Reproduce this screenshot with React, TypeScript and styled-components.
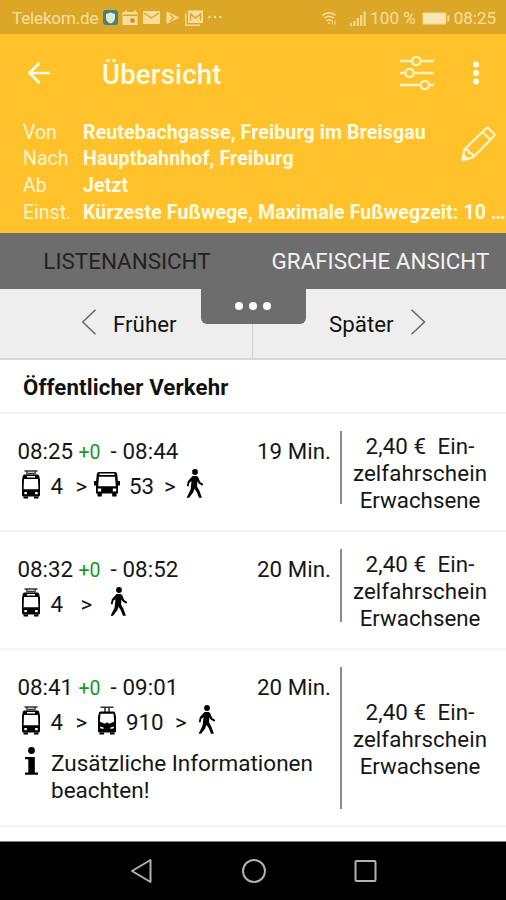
import React from "react";
import styled, { createGlobalStyle } from "styled-components";

const GlobalStyle = createGlobalStyle`
  *, *::before, *::after { box-sizing: border-box; }
  html, body { margin: 0; padding: 0; background: #fff; }
  body { font-family: Roboto, "Liberation Sans", sans-serif; color: #161616; overflow: hidden; }
  svg { display: block; flex: none; }
`;

const Screen = styled.div`
  width: 506px;
  height: 900px;
  display: flex;
  flex-direction: column;
  overflow: hidden;
  background: #fff;
`;

/* ---------- status bar ---------- */

const StatusBar = styled.div`
  height: 34px;
  flex: none;
  display: flex;
  align-items: center;
  justify-content: space-between;
  padding: 2px 10px 0 12px;
  background: #dca727;
  color: #f9dfa0;
  font-size: 17px;
  line-height: 34px;
  white-space: nowrap;
`;

const StatusGroup = styled.div`
  display: flex;
  align-items: center;
`;

const StatusText = styled.span<{ $spacing?: number; $left?: number; $width?: number }>`
  display: inline-block;
  width: ${(p) => (p.$width ? `${p.$width}px` : "auto")};
  letter-spacing: ${(p) => p.$spacing ?? 0}px;
  margin-left: ${(p) => p.$left ?? 0}px;
`;

const Spacer = styled.span<{ $width: number }>`
  flex: none;
  width: ${(p) => p.$width}px;
`;

/* ---------- header ---------- */

const Header = styled.header`
  height: 199px;
  flex: none;
  background: #ffc22b;
  color: #fffbe6;
`;

const TitleBar = styled.div`
  height: 82px;
  display: flex;
  align-items: center;
  padding: 0 26px 4px 27px;
`;

const Title = styled.h1`
  flex: 1;
  margin: 0 0 0 51px;
  padding-top: 4px;
  font-size: 27.5px;
  line-height: 40px;
  font-weight: 500;
  letter-spacing: 0.2px;
`;

const Query = styled.div`
  position: relative;
  padding: 3.5px 0 0 23px;
`;

const QueryRow = styled.div`
  display: flex;
  height: 26.8px;
  align-items: center;
  font-size: 19.5px;
  line-height: 26.8px;
  white-space: nowrap;
`;

const QueryLabel = styled.span`
  flex: none;
  width: 60px;
  opacity: 0.9;
`;

const QueryValue = styled.span`
  flex: none;
  font-weight: 700;
  letter-spacing: 0.14px;
`;

const EditButton = styled.button`
  position: absolute;
  top: 10px;
  right: 9px;
  padding: 0;
  border: 0;
  background: none;
`;

/* ---------- tabs ---------- */

const Tabs = styled.nav`
  position: relative;
  height: 56px;
  flex: none;
  display: grid;
  grid-template-columns: 253px 253px;
  background: #6d6d6d;
`;

const Tab = styled.div<{ $active?: boolean }>`
  text-align: center;
  padding-left: ${(p) => (p.$active ? "1px" : "2px")};
  font-size: 22.4px;
  line-height: 57px;
  color: ${(p) => (p.$active ? "#222" : "#f2f2f2")};
  white-space: nowrap;
`;

const PullHandle = styled.div`
  position: absolute;
  top: 55px;
  left: 201px;
  width: 105px;
  height: 36px;
  display: flex;
  align-items: center;
  justify-content: center;
  gap: 6px;
  padding: 0 2px 1px 0;
  border-radius: 0 0 6px 6px;
  background: #6d6d6d;
`;

const HandleDot = styled.i`
  width: 8px;
  height: 8px;
  border-radius: 50%;
  background: #fff;
`;

/* ---------- earlier / later ---------- */

const Pager = styled.div`
  height: 71px;
  flex: none;
  display: grid;
  grid-template-columns: 253px 253px;
  background: #eee;
  border-bottom: 2px solid #d9d9d9;
`;

const PagerButton = styled.div<{ $side: "left" | "right" }>`
  display: flex;
  align-items: center;
  gap: ${(p) => (p.$side === "left" ? 15 : 16)}px;
  padding-left: ${(p) => (p.$side === "left" ? 82 : 76)}px;
  border-right: ${(p) => (p.$side === "left" ? "1px solid #d4d4d4" : "0")};
  font-size: 22.3px;
  color: #111;

  svg { margin-bottom: 3px; }
`;

/* ---------- connections ---------- */

const SectionTitle = styled.h2`
  height: 54px;
  flex: none;
  margin: 0;
  padding: 0 0 0 23px;
  font-size: 22.2px;
  line-height: 54px;
  font-weight: 700;
  letter-spacing: 0.15px;
  color: #111;
  border-bottom: 2px solid #f4f4f4;
`;

const Row = styled.article<{ $height: number; $bottom: number }>`
  height: ${(p) => p.$height}px;
  flex: none;
  display: grid;
  grid-template-columns: 342px 1fr;
  grid-template-rows: minmax(0, 1fr);
  padding: 17px 0 ${(p) => p.$bottom}px;
  border-bottom: 2px solid #f4f4f4;
`;

const Trip = styled.div`
  padding: 8px 9px 0 17.5px;
  border-right: 2px solid #8a8a8a;
`;

const Times = styled.div`
  display: flex;
  height: 25px;
  line-height: 25px;
  font-size: 22.3px;
  white-space: nowrap;
`;

const Departure = styled.span`
  width: 61px;
`;

const Delay = styled.span`
  width: 32px;
  font-size: 19.5px;
  line-height: 27px;
  color: #159a1b;
`;

const Arrival = styled.span`
  flex: 1;
  letter-spacing: 0.1px;
`;

const Duration = styled.span`
  letter-spacing: 0.05px;
`;

const Legs = styled.div`
  display: flex;
  align-items: center;
  height: 30px;
  margin-top: 5px;
  padding-left: 3.5px;
  font-size: 22.3px;
  line-height: 30px;
`;

const Line = styled.span<{ $width: number }>`
  width: ${(p) => p.$width}px;
  margin-left: 9.5px;
  padding-top: 4.5px;
`;

const Arrow = styled.span<{ $width: number }>`
  width: ${(p) => p.$width}px;
  padding-top: 4.5px;
`;

const Notice = styled.div`
  display: flex;
  gap: 12px;
  margin-top: 12px;
  padding-left: 6.5px;
  font-size: 22.5px;
  line-height: 27px;
  white-space: nowrap;

  p { margin: 3px 0 0; }
`;

const Price = styled.div<{ $shift: number }>`
  display: flex;
  flex-direction: column;
  align-items: center;
  justify-content: center;
  padding: ${(p) => p.$shift}px 8px 0 0;
  font-size: 22.3px;
  line-height: 26.7px;
  white-space: pre;
`;

const PriceLine = styled.span<{ $spacing?: number }>`
  letter-spacing: ${(p) => p.$spacing ?? 0}px;
`;

/* ---------- system bar ---------- */

const SystemBar = styled.footer`
  height: 59px;
  margin-top: auto;
  flex: none;
  display: flex;
  align-items: center;
  padding-left: 129.5px;
  gap: 88px;
  background: #000;
  border-top: 1px solid #777;
`;

/* ---------- icons ---------- */

const NotificationIcons = () => (
  <svg width="122" height="20" viewBox="0 0 122 20">
    <rect x="1" y="2" width="15" height="15" rx="3" fill="#3a8489" />
    <path d="M8.500 4.500 13 6v4c0 3-2 4.600-4.500 5.500C6 14.600 4 13 4 10V6z" fill="#e9e6c4" />
    <g fill="#f7dc9b">
      <path d="M23 2.500h2v1.500h7V2.500h2V4h1.500v13h-15V4H23z" />
      <rect x="41" y="3" width="17" height="13" rx="1" />
      <path d="m64.500 3.500 13 6-13 6.500z" />
      <path d="M86 2.500h15v12.500H86z" />
      <path d="M83 5.500h1.500V16.500H98V18H83z" />
      <circle cx="107.500" cy="9" r="1.200" />
      <circle cx="113" cy="9" r="1.200" />
      <circle cx="118.500" cy="9" r="1.200" />
    </g>
    <g fill="none" stroke="#dca727" strokeWidth="1.400">
      <path d="M21 7.200h14M42 5l7.500 5L57 5M68 6.500l3.500 3.300-3.500 3.500M88.500 12.500V6l5 4 5-4v6.500" />
    </g>
    <rect x="28.500" y="10.500" width="4" height="4" fill="#c18c25" />
  </svg>
);

const WifiIcon = () => (
  <svg width="16" height="16" viewBox="0 0 16 16" fill="none" stroke="#f7dc9b" strokeWidth="1.600">
    <path d="M1.500 5.500C5 2 11 2 14.500 5.500M3.500 8.200c2.600-2.400 6.400-2.400 9 0M5.500 10.800c1.500-1.300 3.500-1.300 5 0" />
    <circle cx="8" cy="13.200" r="1" fill="#f7dc9b" stroke="none" />
    <path d="M11.500 10.500v4M14 10.500v4" strokeWidth="1" />
  </svg>
);

const SignalIcon = () => (
  <svg width="18" height="17" viewBox="0 0 18 17" fill="#f7dc9b">
    <path d="M1 13h2v3H1zM4.400 11h2v5h-2zM7.800 8h2v8h-2zM11.200 5h2v11h-2zM14.600 1.500h2V16h-2z" />
  </svg>
);

const BatteryIcon = () => (
  <svg width="28" height="13" viewBox="0 0 28 13">
    <rect x="0.600" y="0.600" width="23.500" height="11.800" rx="1" fill="#f7dc9b" />
    <rect x="2" y="2" width="20.700" height="9" fill="#fae6b4" />
    <rect x="25.400" y="3.500" width="1.800" height="6" fill="#f7dc9b" />
  </svg>
);

const BackIcon = () => (
  <svg width="24" height="24" viewBox="0 0 24 24" fill="none" stroke="#fffdf0" strokeWidth="2.700">
    <path d="M23 12H3M12.500 2 2.500 12l10 10" />
  </svg>
);

const SlidersIcon = () => (
  <svg width="36" height="36" viewBox="0 0 36 36" stroke="#fff3c4" strokeWidth="2.300" fill="#ffc22b">
    <path d="M1 6h34M1 18h34M1 30h34" />
    <circle cx="17.300" cy="6" r="4.200" />
    <circle cx="10.600" cy="18" r="4.200" />
    <circle cx="25.900" cy="30" r="4.200" />
  </svg>
);

const MoreIcon = () => (
  <svg width="8" height="26" viewBox="0 0 8 26" fill="#fffdf0">
    <circle cx="4" cy="4.500" r="3" />
    <circle cx="4" cy="13" r="3" />
    <circle cx="4" cy="21.500" r="3" />
  </svg>
);

const PencilIcon = () => (
  <svg width="36" height="36" viewBox="0 0 36 36" fill="none" stroke="#fff6d0" strokeWidth="2.100" strokeLinejoin="round">
    <path d="M1.500 34 3.500 23.500 25 2.500q1.300-1.200 2.600 0l5.200 5q1.400 1.400 0 2.800L12 31.500z" />
    <path d="M3.500 23.500q4.500-.5 4.500 3.500 4.500-.3 4 4.500M21.500 6l8 7.700" />
    <path d="m1.500 34 1-5 4 4z" fill="#fff6d0" />
  </svg>
);

const Chevron = ({ dir }: { dir: "left" | "right" }) => (
  <svg width="16" height="26" viewBox="0 0 16 26" fill="none" stroke="#666" strokeWidth="1.500">
    <path d={dir === "left" ? "M13.500.8.800 13l12.700 12.200" : "M1.500.8 14.500 13 1.500 25.200"} />
  </svg>
);

const TramIcon = () => (
  <svg width="20" height="29" viewBox="0 0 20 29">
    <path d="M3.500 1h13M6 1.500v3M14 1.500v3M7 3.500h6" fill="none" stroke="#333" strokeWidth="1.500" />
    <path
      fillRule="evenodd"
      d="M3.500 4.500h13q1.500 0 1.700 1.500L19 10v15q0 1.500-1.500 1.500h-15Q1 26.500 1 25V10l.8-4q.2-1.500 1.700-1.500zM6 6v1.500h8V6zM3 9l-.4 10.200h14.800L17 9zM3.300 22v2.200h2.600V22zM14.100 22v2.200h2.600V22z"
    />
    <path d="M2.500 26.500H7V28.500H2.500zM13 26.500h4.500v2H13z" />
  </svg>
);

const LightRailIcon = () => (
  <svg width="20" height="29" viewBox="0 0 20 29">
    <path d="M3.500 1.200h13M8 1.500v4.500M12 1.500v4.500" fill="none" stroke="#333" strokeWidth="1.600" />
    <path
      fillRule="evenodd"
      d="M3.500 5.500h13q1.500 0 1.700 1.500L19 11v14q0 1.500-1.500 1.500h-15Q1 26.500 1 25V11l.8-4q.2-1.500 1.700-1.500zM3.500 7.800 2.800 15.500 7 17.500h6l4.200-2-.7-7.700zM3.200 20.500v1.800l3.300.8v-1.500zM16.800 20.500v1.800l-3.300.8v-1.500z"
    />
    <path d="M8 18.500 10 16l2 2.500z" />
    <path d="M2.500 26.500H7V28.500H2.500zM13 26.500h4.500v2H13z" />
  </svg>
);

const BusIcon = () => (
  <svg width="26" height="26" viewBox="0 0 26 26">
    <path
      fillRule="evenodd"
      d="M5 1h16q2 0 2.200 2l.8 8v11.500H2V11L2.800 3Q3 1 5 1zM5.500 2.600v1.500h15V2.600zM5 5.800l-.8 9.400h17.600L21 5.800zM3.800 17.500v3h3.400v-3zM18.800 17.500v3h3.400v-3z"
    />
    <path d="M0 10h2v4.500H0zM24 10h2v4.500h-2zM3.500 22h4.300v3.500H3.500zM18.200 22h4.300v3.500h-4.300z" />
  </svg>
);

const WalkIcon = () => (
  <svg width="18" height="30" viewBox="0 0 18 30">
    <circle cx="9" cy="3" r="2.900" />
    <path d="M6.500 7h4.200l1.500 1.200 2 4.800 3 2-.8 1.700-3.700-2.100-1.300-2.400-.3 5.300 2.300 4.300 2.500 7H13l-2.300-5.800-2.300-3.300-1.200 3.800L3 28.800H.6l4-8.300.9-8.300-2 1.400-1 4L.8 17l1-4.800z" />
  </svg>
);

const InfoIcon = () => (
  <svg width="15" height="29" viewBox="0 0 15 29">
    <circle cx="7.500" cy="3.500" r="3.400" />
    <path d="M1 10h9.800v15.500H14v2.300H1v-2.300h3.300V12.300H1z" />
  </svg>
);

const SystemIcon = ({ kind }: { kind: "back" | "home" | "recent" }) => (
  <svg width="24" height="26" viewBox="0 0 24 26" fill="none" stroke="#b2b2b2" strokeWidth="2">
    {kind === "back" && <path d="M20.500 2v22L2 13z" strokeLinejoin="round" />}
    {kind === "home" && <circle cx="12" cy="13" r="11" />}
    {kind === "recent" && <rect x="1.500" y="3" width="20" height="20" rx="1" />}
  </svg>
);

/* ---------- data ---------- */

type Leg =
  | { kind: "tram" | "rail" | "bus"; line: string; lineWidth: number; arrowWidth: number }
  | { kind: "walk" };

interface Connection {
  departure: string;
  arrival: string;
  duration: string;
  legs: Leg[];
  height: number;
  notice?: [string, string];
}

const connections: Connection[] = [
  {
    departure: "08:25",
    arrival: "08:44",
    duration: "19 Min.",
    height: 118,
    legs: [
      { kind: "tram", line: "4", lineWidth: 25, arrowWidth: 18 },
      { kind: "bus", line: "53", lineWidth: 35, arrowWidth: 22 },
      { kind: "walk" },
    ],
  },
  {
    departure: "08:32",
    arrival: "08:52",
    duration: "20 Min.",
    height: 118,
    legs: [{ kind: "tram", line: "4", lineWidth: 30, arrowWidth: 29 }, { kind: "walk" }],
  },
  {
    departure: "08:41",
    arrival: "09:01",
    duration: "20 Min.",
    height: 177,
    notice: ["Zusätzliche Informationen", "beachten!"],
    legs: [
      { kind: "tram", line: "4", lineWidth: 25, arrowWidth: 21 },
      { kind: "rail", line: "910", lineWidth: 49, arrowWidth: 23 },
      { kind: "walk" },
    ],
  },
];

const query: [string, string][] = [
  ["Von", "Reutebachgasse, Freiburg im Breisgau"],
  ["Nach", "Hauptbahnhof, Freiburg"],
  ["Ab", "Jetzt"],
  ["Einst.", "Kürzeste Fußwege, Maximale Fußwegzeit: 10 …"],
];

const legIcons = { tram: TramIcon, rail: LightRailIcon, bus: BusIcon, walk: WalkIcon };

const LegView = ({ leg }: { leg: Leg }) => {
  const Icon = legIcons[leg.kind];
  return (
    <>
      <Icon />
      {leg.kind !== "walk" && (
        <>
          <Line $width={leg.lineWidth}>{leg.line}</Line>
          <Arrow $width={leg.arrowWidth}>&gt;</Arrow>
        </>
      )}
    </>
  );
};

const ConnectionRow = ({ item }: { item: Connection }) => (
  <Row $height={item.height} $bottom={item.notice ? 16 : 26}>
    <Trip>
      <Times>
        <Departure>{item.departure}</Departure>
        <Delay>+0</Delay>
        <Arrival>- {item.arrival}</Arrival>
        <Duration>{item.duration}</Duration>
      </Times>
      <Legs>
        {item.legs.map((leg, i) => (
          <LegView key={i} leg={leg} />
        ))}
      </Legs>
      {item.notice && (
        <Notice>
          <InfoIcon />
          <p>
            {item.notice[0]}
            <br />
            {item.notice[1]}
          </p>
        </Notice>
      )}
    </Trip>
    <Price $shift={item.notice ? 3 : 12}>
      <PriceLine $spacing={0.1}>{"2,40 €  Ein-"}</PriceLine>
      <PriceLine $spacing={0.1}>zelfahrschein</PriceLine>
      <PriceLine>Erwachsene</PriceLine>
    </Price>
  </Row>
);

export default function App() {
  return (
    <Screen>
      <GlobalStyle />
      <StatusBar>
        <StatusGroup>
          <StatusText $spacing={-0.15} $width={90}>Telekom.de</StatusText>
          <NotificationIcons />
        </StatusGroup>
        <StatusGroup>
          <WifiIcon />
          <Spacer $width={12} />
          <SignalIcon />
          <StatusText $left={3}>100 %</StatusText>
          <Spacer $width={6} />
          <BatteryIcon />
          <StatusText $left={4}>08:25</StatusText>
        </StatusGroup>
      </StatusBar>
      <Header>
        <TitleBar>
          <BackIcon />
          <Title>Übersicht</Title>
          <SlidersIcon />
          <Spacer $width={37} />
          <MoreIcon />
        </TitleBar>
        <Query>
          {query.map(([label, value]) => (
            <QueryRow key={label}>
              <QueryLabel>{label}</QueryLabel>
              <QueryValue>{value}</QueryValue>
            </QueryRow>
          ))}
          <EditButton aria-label="Bearbeiten">
            <PencilIcon />
          </EditButton>
        </Query>
      </Header>
      <Tabs>
        <Tab $active>LISTENANSICHT</Tab>
        <Tab>GRAFISCHE ANSICHT</Tab>
        <PullHandle>
          <HandleDot />
          <HandleDot />
          <HandleDot />
        </PullHandle>
      </Tabs>
      <Pager>
        <PagerButton $side="left">
          <Chevron dir="left" />
          <span>Früher</span>
        </PagerButton>
        <PagerButton $side="right">
          <span>Später</span>
          <Chevron dir="right" />
        </PagerButton>
      </Pager>
      <SectionTitle>Öffentlicher Verkehr</SectionTitle>
      {connections.map((item) => (
        <ConnectionRow key={item.departure} item={item} />
      ))}
      <SystemBar>
        <SystemIcon kind="back" />
        <SystemIcon kind="home" />
        <SystemIcon kind="recent" />
      </SystemBar>
    </Screen>
  );
}
